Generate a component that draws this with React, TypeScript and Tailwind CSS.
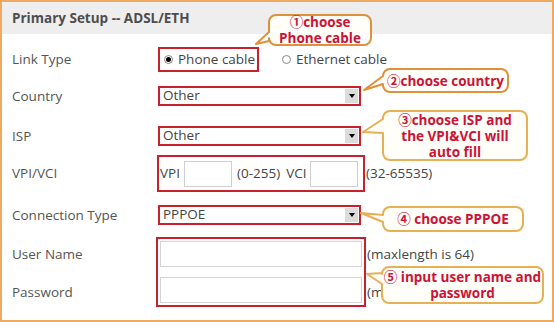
import React from "react"

const FONT = { fontFamily: '"Open Sans", "Noto Sans", "Noto Sans CJK SC", sans-serif' }

type CalloutProps = {
  x: number
  y: number
  w: number
  h: number
  tip: [number, number]
  base: [number, number]
  stroke: string
  lines: string[]
}

// speech bubble drawn as svg, text kept as real text on top
function Callout({ x, y, w, h, tip, base, stroke, lines }: CalloutProps) {
  const r = 7
  const tx = tip[0] - x
  const ty = tip[1] - y
  const d = `M ${r} 0 H ${w - r} A ${r} ${r} 0 0 1 ${w} ${r} V ${h - r} A ${r} ${r} 0 0 1 ${w - r} ${h} H ${r} A ${r} ${r} 0 0 1 0 ${h - r} V ${base[1]} L ${tx} ${ty} L 0 ${base[0]} V ${r} A ${r} ${r} 0 0 1 ${r} 0 Z`
  return (
    <div className="absolute" style={{ left: x, top: y, width: w, height: h }}>
      <svg className="absolute left-0 top-0 overflow-visible" width={w} height={h}>
        <path d={d} fill="#fffef8" stroke={stroke} strokeWidth={2} strokeLinejoin="round" />
      </svg>
      <div
        className="relative flex h-full flex-col items-center justify-center text-[13.5px] font-bold leading-[16px] text-[#cc1236]"
        style={FONT}
      >
        {lines.map((l) => (
          <span key={l} className="block h-[16px] whitespace-nowrap">
            {l}
          </span>
        ))}
      </div>
    </div>
  )
}

function Radio({ checked }: { checked?: boolean }) {
  return (
    <span className="flex h-[9px] w-[9px] shrink-0 items-center justify-center rounded-full border border-[#888] bg-white">
      {checked && <span className="h-[5px] w-[5px] rounded-full bg-black" />}
    </span>
  )
}

function Select({ value }: { value: string }) {
  return (
    <div className="flex h-[20px] w-[203px] items-center border-2 border-[#c9202e] bg-white">
      <span className="flex-1 pl-[3px] text-[13.5px] leading-none text-[#444]">{value}</span>
      <span className="mr-[1px] flex h-[14px] w-[13px] items-center justify-center bg-[#dcdcdc]">
        <span className="h-0 w-0 border-x-[3.5px] border-t-[4px] border-x-transparent border-t-black" />
      </span>
    </div>
  )
}

function Label({ children }: { children: React.ReactNode }) {
  return <div className="w-[156px] shrink-0 pl-[10px] text-[13.5px] text-[#555]">{children}</div>
}

export default function App() {
  return (
    <div className="relative h-[322px] w-[554px] overflow-hidden bg-white" style={FONT}>
      <div className="h-full border-2 border-[#eeaa60]">
        <div className="flex h-[32px] items-center bg-[#eeeeee] px-[10px] text-[13.5px] font-bold text-[#4d4d4d]">
          Primary Setup -- ADSL/ETH
        </div>

        <div className="mt-[13px] flex h-[24px] items-center">
          <Label>Link Type</Label>
          <div className="flex h-[25px] w-[101px] shrink-0 items-center gap-[5px] whitespace-nowrap border-2 border-[#c9202e] pl-[4px] text-[13.5px] text-[#444]">
            <Radio checked />
            <span>Phone cable</span>
          </div>
          <div className="ml-[23px] flex items-center gap-[5px] whitespace-nowrap text-[13.5px] text-[#444]">
            <Radio />
            <span>Ethernet cable</span>
          </div>
        </div>

        <div className="mt-[15px] flex h-[20px] items-center">
          <Label>Country</Label>
          <Select value="Other" />
        </div>

        <div className="mt-[20px] flex h-[20px] items-center">
          <Label>ISP</Label>
          <Select value="Other" />
        </div>

        <div className="mt-[9px] flex h-[37px] items-center">
          <Label>VPI/VCI</Label>
          <div className="-ml-[1px] flex h-[37px] w-[208px] items-center border-2 border-[#c9202e] pl-[1px] text-[13.5px] text-[#444]">
            <span>VPI</span>
            <span className="ml-[4px] h-[26px] w-[48px] border border-[#cfcfcf]" />
            <span className="ml-[5px]">(0-255)</span>
            <span className="ml-[6px]">VCI</span>
            <span className="ml-[4px] h-[26px] w-[48px] border border-[#cfcfcf]" />
          </div>
          <span className="ml-[1px] text-[13.5px] text-[#444]">(32-65535)</span>
        </div>

        <div className="mt-[13px] flex h-[20px] items-center">
          <Label>Connection Type</Label>
          <Select value="PPPOE" />
        </div>

        <div className="mt-[12px] flex h-[70px] items-start">
          <div className="w-[156px] shrink-0 pl-[10px] text-[13.5px] leading-[18px] text-[#555]">
            <div className="mt-[8px] h-[18px]">User Name</div>
            <div className="mt-[20px] h-[18px]">Password</div>
          </div>
          <div className="-ml-[2px] flex h-[70px] w-[210px] shrink-0 flex-col gap-[10px] border-2 border-[#c9202e] px-[2px] pt-[2px]">
            <span className="block h-[26px] w-full border border-[#d4d4d4]" />
            <span className="block h-[26px] w-full border border-[#d4d4d4]" />
          </div>
          <div className="pl-[1px] text-[13.5px] leading-[18px] text-[#444]">
            <div className="mt-[8px] h-[18px] whitespace-nowrap">(maxlength is 64)</div>
            <div className="mt-[20px] h-[18px] whitespace-nowrap">(m</div>
          </div>
        </div>
      </div>

      <Callout x={269} y={15} w={102} h={30} tip={[256, 44]} base={[17, 26]} stroke="#e0903a" lines={["①choose", "Phone cable"]} />
      <Callout x={383} y={69} w={125} h={23} tip={[364, 90]} base={[7, 15]} stroke="#e0903a" lines={["②choose country"]} />
      <Callout x={383} y={111} w={144} h={49} tip={[363, 132]} base={[8, 22]} stroke="#e8b055" lines={["③choose ISP and", "the VPI&VCI will", "auto fill"]} />
      <Callout x={383} y={207} w={140} h={24} tip={[361, 213]} base={[8, 15]} stroke="#e8b055" lines={["④ choose PPPOE"]} />
      <Callout x={382} y={267} w={161} h={36} tip={[367, 274]} base={[6, 17]} stroke="#e8b055" lines={["⑤ input user name and", "password"]} />
    </div>
  )
}
